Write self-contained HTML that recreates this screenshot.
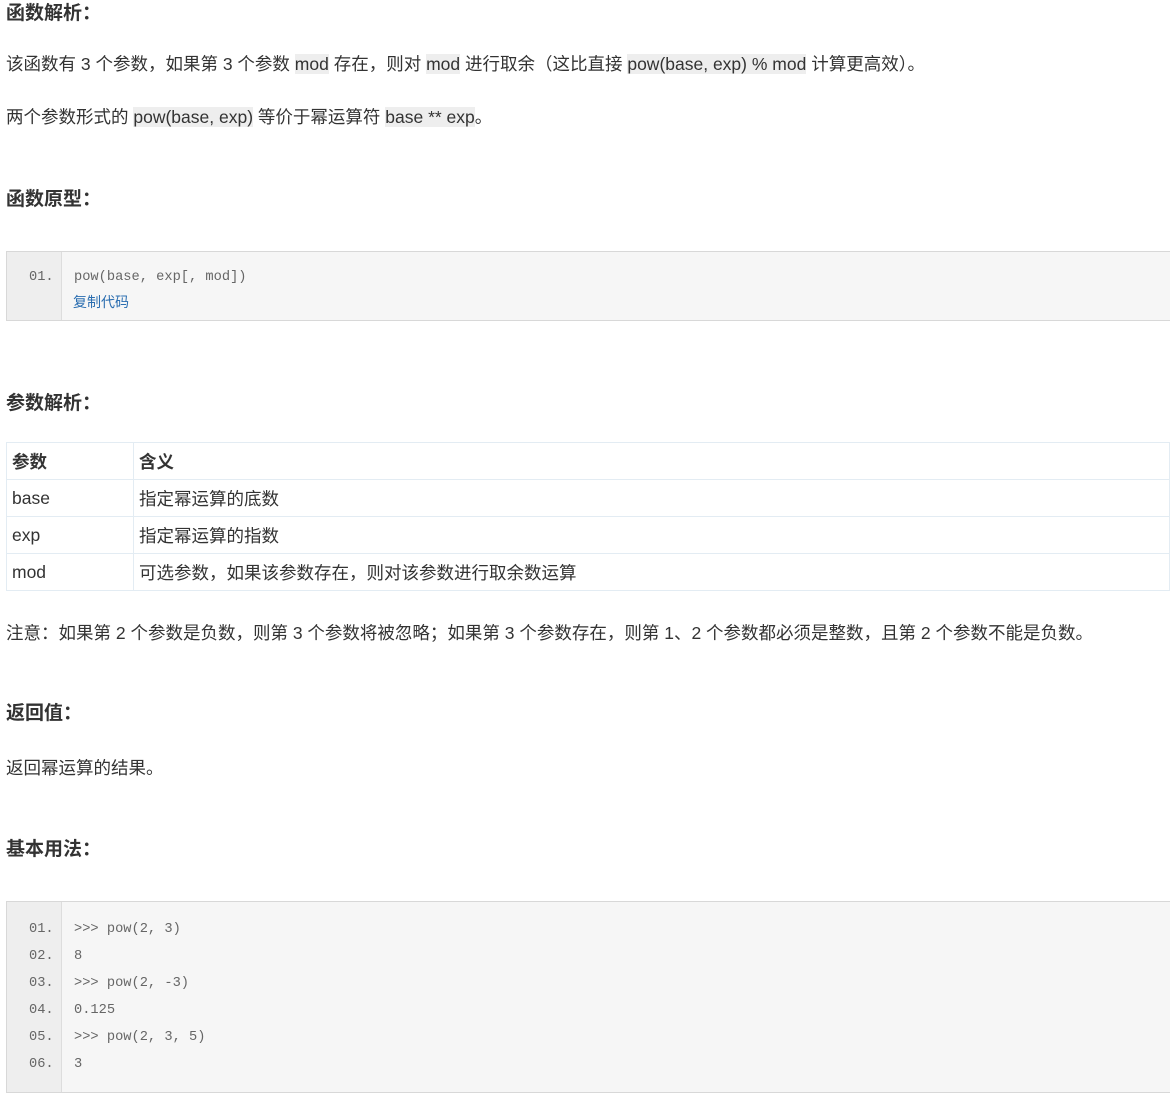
<!DOCTYPE html>
<html><head><meta charset="utf-8"><style>
body{margin:0;width:1170px;height:1076px;overflow:hidden;background:#fff;font-family:"Liberation Sans","Noto Sans CJK SC",sans-serif;color:#333;font-size:17.5px}
.a{position:absolute;white-space:nowrap;line-height:24px}
h3{position:absolute;margin:0;font-size:19px;font-weight:bold;color:#333;line-height:24px;left:6px}
code{background:#eee;font-family:"Liberation Sans","Noto Sans CJK SC",sans-serif;font-size:17.5px}
.cb{position:absolute;left:6px;width:1170px;background:#f6f6f6;border:1px solid #d8d8d8;border-right:none}
.ln{position:absolute;left:0;top:0;bottom:0;width:54px;background:#eee;border-right:1px solid #ddd}
.m{position:absolute;font-family:"Liberation Mono",monospace;font-size:13.7px;color:#666;line-height:20px;white-space:pre}
table{position:absolute;left:6px;top:442px;width:1164px;border-collapse:collapse}
td{border:1px solid #e3ecf3;height:36px;padding:0 0 0 5px;font-size:17.5px;color:#333}
</style></head><body>
<h3 style="top:2px">函数解析：</h3>
<div class="a" style="left:6px;top:52px">该函数有 3 个参数，如果第 3 个参数 <code>mod</code> 存在，则对 <code>mod</code> 进行取余（这比直接 <code>pow(base, exp) % mod</code> 计算更高效）。</div>
<div class="a" style="left:6px;top:105px">两个参数形式的 <code>pow(base, exp)</code> 等价于幂运算符 <code>base ** exp</code>。</div>
<h3 style="top:188px">函数原型：</h3>
<div class="cb" style="top:251px;height:68px"><div class="ln"></div>
<div class="m" style="left:22px;top:16px">01.</div>
<div class="m" style="left:67px;top:16px">pow(base, exp[, mod])</div>
<div class="a" style="left:66px;top:40px;font-size:14px;color:#2a6db0;line-height:20px">复制代码</div></div>
<h3 style="top:392px">参数解析：</h3>
<table>
<tr><td style="width:121px;font-weight:bold">参数</td><td style="font-weight:bold">含义</td></tr>
<tr><td>base</td><td>指定幂运算的底数</td></tr>
<tr><td>exp</td><td>指定幂运算的指数</td></tr>
<tr><td>mod</td><td>可选参数，如果该参数存在，则对该参数进行取余数运算</td></tr>
</table>
<div class="a" style="left:6px;top:621px">注意：如果第 2 个参数是负数，则第 3 个参数将被忽略；如果第 3 个参数存在，则第 1、2 个参数都必须是整数，且第 2 个参数不能是负数。</div>
<h3 style="top:702px">返回值：</h3>
<div class="a" style="left:6px;top:756px">返回幂运算的结果。</div>
<h3 style="top:838px">基本用法：</h3>
<div class="cb" style="top:901px;height:190px"><div class="ln"></div>
<div class="m" style="left:22px;top:14px;line-height:27px">01.
02.
03.
04.
05.
06.</div>
<div class="m" style="left:67px;top:14px;line-height:27px">&gt;&gt;&gt; pow(2, 3)
8
&gt;&gt;&gt; pow(2, -3)
0.125
&gt;&gt;&gt; pow(2, 3, 5)
3</div></div>
</body></html>
